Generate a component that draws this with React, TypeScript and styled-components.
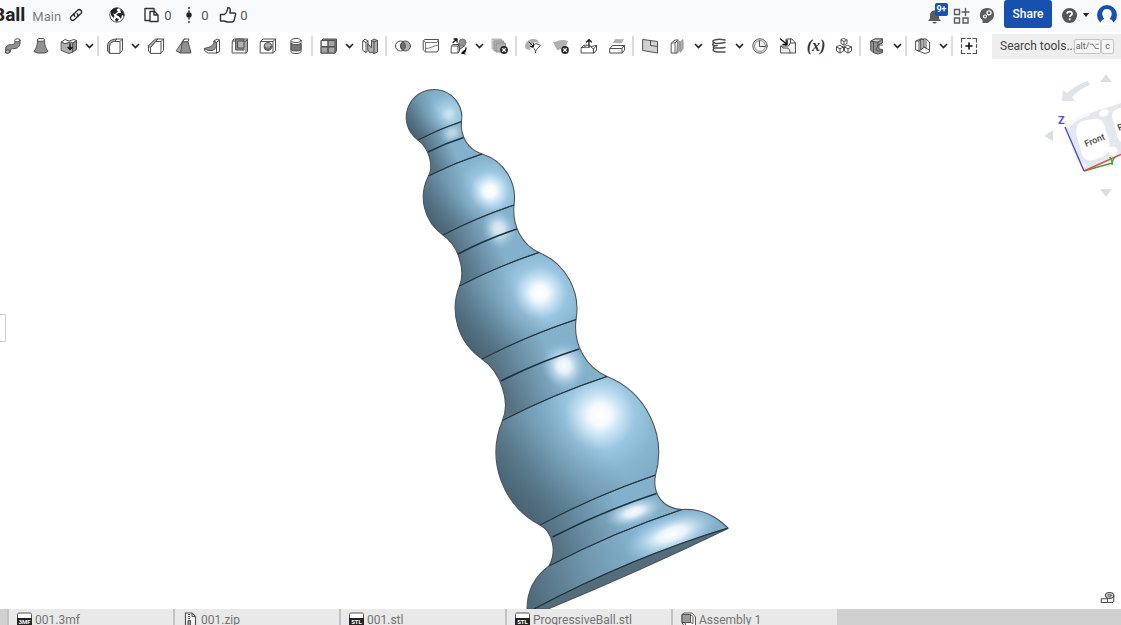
import React from "react";
import styled, { createGlobalStyle } from "styled-components";

const GlobalStyle = createGlobalStyle`
  * { box-sizing: border-box; }
  body { margin: 0; background: #fff; font-family: Roboto, "Noto Sans", sans-serif; color: #333; }
  button, input { font: inherit; color: inherit; }
`;

const Page = styled.div`
  display: flex;
  flex-direction: column;
  height: 100vh;
  overflow: hidden;
`;

const Header = styled.header`
  display: flex;
  align-items: center;
  justify-content: space-between;
  flex: none;
  height: 32px;
  padding-bottom: 2px;
  background: #f9fafc;
`;

const HeaderGroup = styled.div`
  display: flex;
  align-items: center;
`;

const Title = styled.h1`
  margin: 0 7px 0 -7px;
  font-size: 19px;
  line-height: 24px;
  font-weight: 700;
  color: #222;
`;

const Branch = styled.span`
  font-size: 13px;
  line-height: 16px;
  margin: 4px 8px 0 0;
  color: #808080;
`;

const IconButton = styled.button<{ $w?: number }>`
  display: flex;
  align-items: center;
  justify-content: center;
  flex: none;
  width: ${(p) => p.$w ?? 28}px;
  height: 28px;
  padding: 0;
  border: 0;
  background: none;
`;

const GlobeButton = styled(IconButton)`
  margin-left: 8px;
`;

const Counter = styled.button<{ $w: number }>`
  display: flex;
  align-items: center;
  gap: 3px;
  width: ${(p) => p.$w}px;
  height: 28px;
  padding: 0;
  border: 0;
  background: none;
  font-size: 13px;
  color: #555;
`;

const ShareButton = styled.button`
  width: 48px;
  height: 28px;
  margin: 0 8px 2px 4px;
  padding: 0;
  border: 0;
  border-radius: 3px;
  background: #1651b0;
  color: #fff;
  font-size: 12px;
  font-weight: 500;
`;

const Alerts = styled(IconButton)`
  position: relative;
`;

const Badge = styled.span`
  position: absolute;
  top: 2px;
  right: 0;
  width: 13px;
  height: 13px;
  border-radius: 2px;
  background: #1651b0;
  color: #fff;
  font-size: 9px;
  line-height: 13px;
  font-weight: 700;
  text-align: center;
`;

const Toolbar = styled.div`
  display: flex;
  align-items: center;
  justify-content: space-between;
  flex: none;
  height: 28px;
  background: #fff;
`;

const Tools = styled.div`
  display: flex;
  align-items: center;
  margin-left: -1px;
`;

const Divider = styled.span`
  flex: none;
  width: 5px;
  height: 20px;
  border: solid #fff;
  border-width: 0 2px 0 1px;
  background: #dcdcdc;
`;

const Search = styled.label`
  display: flex;
  align-items: center;
  flex: none;
  width: 129px;
  height: 25px;
  padding-left: 8px;
  background: #eeeeee;
`;

const SearchInput = styled.input`
  width: 74px;
  padding: 0;
  border: 0;
  background: none;
  font-size: 12px;
  outline: none;
  &::placeholder { color: #444; opacity: 1; }
`;

const Key = styled.kbd<{ $w: number }>`
  width: ${(p) => p.$w}px;
  height: 15px;
  border: 1px solid #c4c4c4;
  border-radius: 2px;
  background: #f5f5f5;
  font-family: inherit;
  font-size: 9px;
  line-height: 13px;
  text-align: center;
  white-space: nowrap;
  color: #666;
  overflow: hidden;
`;

const Stage = styled.main`
  position: relative;
  display: flex;
  justify-content: center;
  flex: 1;
  min-height: 0;
  overflow: hidden;
  background: #fff;
`;

const ModelSvg = styled.svg`
  flex: none;
`;

const PanelHandle = styled.button`
  position: absolute;
  left: -1px;
  top: 254px;
  width: 7px;
  height: 28px;
  padding: 0;
  border: 1px solid #cfcfcf;
  background: #fff;
`;

const CubeSvg = styled.svg`
  position: absolute;
  top: 0;
  right: 0;
`;

const MeasureButton = styled(IconButton)`
  position: absolute;
  right: 0;
  bottom: -2px;
`;

const TabBar = styled.nav`
  display: flex;
  flex: none;
  height: 16px;
  padding-left: 7px;
  background: #d0d0d0;
  overflow: hidden;
`;

const Tab = styled.a`
  display: flex;
  align-items: center;
  gap: 2px;
  flex: none;
  width: 166px;
  height: 22px;
  padding-left: 7px;
  border-left: 2px solid #c2c2c2;
  background: #e9e9e9;
  color: #737373;
  font-size: 12px;
  line-height: 22px;
  text-decoration: none;
`;

const S = "#505050";
const G = "#b0b0b0";
const D = "#919191";

const Ic = ({ children, size = 18 }: { children: React.ReactNode; size?: number }) => (
  <svg width={size} height={size} viewBox="0 0 18 18" fill="none" stroke={S} strokeWidth="1" strokeLinejoin="round" strokeLinecap="round" aria-hidden="true">
    {children}
  </svg>
);

const Cross = () => (
  <>
    <circle cx="13" cy="13" r="3.9" fill="#2b2b2b" stroke="none" />
    <path d="M11.6 11.6l2.8 2.8M14.4 11.6l-2.8 2.8" stroke="#fff" strokeWidth="1.3" />
  </>
);

const icons: Record<string, React.ReactNode> = {
  Sweep: (
    <>
      <path d="M1.500 13c0-5 3-5.500 6-5.300 2.500 0 3.500-.7 3.500-3.700l5-1c.5 5-1 8-5 8.500-3 .3-4.500-.5-5 4L2 16z" fill={D} />
      <ellipse cx="13.400" cy="3.300" rx="2.800" ry="1.500" fill="#fff" />
      <ellipse cx="3.700" cy="14.500" rx="2.200" ry="1.800" fill={G} />
    </>
  ),
  Loft: (
    <>
      <path d="M5.500 3c0 5-1 8-3.500 11.500l3.500 1.500h7l3.500-1.500C13.500 11 12.500 8 12.500 3z" fill={D} />
      <path d="M5.500 3l1-1.500h5l1 1.500-1 1.200h-5z" fill="#fff" />
    </>
  ),
  Thicken: (
    <>
      <path d="M1.500 5l4 1.500 5-1.500 2.500 1v9l-4 1.500-4-1.500-3.500-1.500z" fill={G} />
      <path d="M1.500 5L5 2.500l4 1.500 5-1.500 2.500 1L13 6l-2.500-1-5 1.500z" fill="#fff" />
      <path d="M13 6l3.500-2.500v9L13 15z" fill={D} />
      <path d="M10 7v5M8 10.500l2 2 2-2" stroke="#111" strokeWidth="1.500" />
    </>
  ),
  Fillet: (
    <>
      <path d="M3.500 16V10c0-4 2-5.500 5-5.500H14V16z" fill="#fff" />
      <path d="M3.500 10c0-4 2-5.500 5-5.500L11 2C5 2 1.500 5 1.500 9v5l2 2z" fill={G} />
      <path d="M11 2h5.500v11.500L14 16M16.500 2L14 4.500" />
    </>
  ),
  Chamfer: (
    <>
      <path d="M3.500 16v-5.500l5-6H14V16z" fill="#fff" />
      <path d="M3.500 10.500l5-6L11 2H8.500L1.500 8.500z" fill={G} />
      <path d="M1.500 8.500V14l2 2M11 2h5.500v11.500L14 16M16.500 2L14 4.500" />
    </>
  ),
  Draft: (
    <>
      <path d="M7.500 4.500H13l3 11.500H5.500z" fill={D} />
      <path d="M7.500 4.500L9.500 2H14l-1 2.500z" fill="#fff" />
      <path d="M9.500 2l-2 2.500L5.500 16l-4-2z" fill={G} />
    </>
  ),
  Rib: (
    <>
      <path d="M1.500 11.500l3-1C9 10 11 7 11 4l2.500 1.500v9L5 13.500z" fill={D} />
      <path d="M11 4l3-2 2.500 1v11.500l-3 1.500H5l-3.500-2.500v-2L5 13.500h5L13.500 10V5.500z" fill="#fff" />
      <path d="M13.500 5.500l3-2.500M13.500 10v6" />
    </>
  ),
  Shell: (
    <>
      <path d="M1.500 4L3 2h13.500v12.500L15 16H1.500z" fill="#fff" />
      <path d="M1.500 4H15v12M15 4l1.500-2" />
      <path d="M5 2h8v11H5z" fill={D} />
      <path d="M7 4h6v7H7z" fill={G} />
    </>
  ),
  Hole: (
    <>
      <path d="M1.500 4.500L4 2h12.500v11.500L14 16H1.500z" fill="#fff" />
      <path d="M1.500 4.500H14V16M14 4.500L16.500 2" />
      <circle cx="9" cy="9.500" r="4" fill={G} />
      <path d="M6 10a3 3 0 003 2.500 3.500 3.500 0 003-3" fill={D} />
    </>
  ),
  Thread: (
    <>
      <path d="M4 3.500v11c0 1.200 2 2 5 2s5-.8 5-2v-11" fill="#fff" />
      <path d="M4 6.500v6c2 2 8 2 10 0v-6c-2 1.500-8 1.500-10 0z" fill="#777" />
      <ellipse cx="9" cy="3.500" rx="5" ry="2" fill="#fff" />
    </>
  ),
  Pattern: (
    <>
      <path d="M1.500 3.500L3 2h13.500v12L15 16H1.500z" fill="#808080" />
      <path d="M1.500 3.500H8v6H1.500z" fill="#f0f0f0" />
      <path d="M8.500 3.500H15v6H8.500zM1.500 10H8v6H1.500zM8.500 10H15v6H8.500z" fill="#a5a5a5" />
    </>
  ),
  Mirror: (
    <>
      <path d="M2 4l2-2 3 2v9.500l-2 2L2 13.500z" fill="#fff" />
      <path d="M2 4l3 1.500v10M5 5.500L7 4" />
      <path d="M7 7l3.500 4V3.500L13 2l3.500 1.500V15L13 16.500 11 15l-2 1-2-3z" fill={G} />
      <path d="M10.500 3.500L13 5v11.500M13 5l3.500-1.500" />
    </>
  ),
  Boolean: (
    <>
      <circle cx="6.500" cy="9" r="5" fill="#fff" />
      <circle cx="11.500" cy="9" r="5" fill={G} />
      <path d="M9 4.700a5 5 0 010 8.600 5 5 0 010-8.600z" fill="#6d6d6d" />
    </>
  ),
  Split: (
    <>
      <path d="M1.500 3.500L3 2.500h13.500V13L15 15H3.500l-2-2z" fill="#fff" />
      <path d="M1.500 3.500l2 2H15l1.500-3M3.500 5.500V15M3.500 11.500c4 .5 8-3 13-3.500" stroke="#777" />
    </>
  ),
  Transform: (
    <>
      <path d="M1.500 9L3 7.500h6.500V14L8 16H1.500z" fill="#fff" />
      <path d="M1.500 9H8v7M8 9l1.500-1.500" />
      <path d="M9 6.500l6 2-5 3.500z" fill={G} />
      <circle cx="12.500" cy="5.500" r="3.500" fill={D} stroke="#777" />
      <path d="M3 5.500L6.500 2.500M4 2H7v3M16 11l-1 4-3 1.500M14.500 13.500L12 16l3 1" stroke="#111" strokeWidth="1.300" />
    </>
  ),
  "Delete part": (
    <>
      <path d="M1.500 2h9v10h-9z" fill="#c4c4c4" stroke={G} />
      <path d="M3.500 4h9v10h-9z" fill="#b8b8b8" stroke={D} />
      <path d="M5.500 6h9v9h-9z" fill={G} stroke={D} />
      <Cross />
    </>
  ),
  "Modify fillet": (
    <>
      <path d="M1 10C1 5 5 2 9 2s6 2 6 4l-4-1-4 3-1 5-4-1z" fill={G} stroke="none" />
      <path d="M9.500 8.500L12 6.500l4.500 2-3 3c-1 1-2 2-2 4.500-.5-4-1-5.500-4-6z" fill="#fff" />
      <path d="M5 5l4.500 4.500M9.500 6.500v3h-3" stroke="#222" />
    </>
  ),
  "Delete face": (
    <>
      <path d="M1 5c4 1 6-4 15-1l-3 8c-4-2-6 2-8 1z" fill={G} stroke="none" />
      <Cross />
    </>
  ),
  "Move face": (
    <>
      <path d="M1.500 10.500c3 0 5-2 7.500-3l2 2 5.500-1V13L14 16H1.500z" fill="#fff" />
      <path d="M1.500 10.500l2-2 3-.5M1.500 10.500c5 0 6 .5 9-1l3 2.500 3-3.500M13.500 12v4" />
      <path d="M9 10V2.500M6.500 5L9 2.500 11.500 5" stroke="#222" strokeWidth="1.300" />
    </>
  ),
  "Replace face": (
    <>
      <path d="M3 6.500c3 0 3-4.500 5-4.500s5 1 8-.5L14 6c-4 1-6-1-11 .5z" fill={G} stroke="none" />
      <path d="M2 11.500l2.500-3h12V13L14 16H2z" fill="#fff" />
      <path d="M2 11.500h12V16M14 11.500l2.500-3" />
    </>
  ),
  Plane: (
    <>
      <path d="M2 2.500l14.500 2v11.500L2 13.500z" fill="#d2d2d2" />
      <path d="M9.500 3.500v5l7 1" />
    </>
  ),
  Helix: (
    <>
      <path d="M2.500 6L6 3h3L8 16H2.500z" fill="#fff" />
      <path d="M2.500 6H6l3-3M6 6v10" stroke="#666" />
      <path d="M8.500 6.500L11 4v9l-2.500 3zM11.500 5L14 2.500v9L11.500 15z" fill={G} stroke={D} />
    </>
  ),
  Spring: (
    <path d="M15 3C7 1.500 2 3 3 5s7 1.500 12 .5M4.500 9C2 10.500 4 11 7 11s6 0 8-.5M4.500 5.500C1 8 3 9 7 8.500M4.500 11C1.500 13.500 4 14.500 7 15h8" strokeWidth="1.500" />
  ),
  "Curve pattern": (
    <>
      <circle cx="9" cy="9" r="7.200" />
      <circle cx="9" cy="9" r="5.500" fill="#f4f4f4" stroke="#888" />
      <path d="M8.500 4v5.500H14" />
    </>
  ),
  "Import part": (
    <>
      <path d="M2 9h5V2h6l3.500 4v10H2z" fill="#f0f0f0" />
      <path d="M7 9h2.500l2-3V2M11.500 6h5M2 9l2 2h4c2 0 3 2 3 5" />
      <path d="M1.500 2l6 5M8 3.500V7.500H4" stroke="#111" strokeWidth="1.500" />
    </>
  ),
  Configurations: (
    <>
      <path d="M9 1.500l3 1.500v3.500L9 8 6 6.500V3zM6 3l3 1.500L12 3M9 4.500V8" fill="#fff" />
      <path d="M5 8.500L8.500 10v4L5 16l-3.500-2v-4zM1.500 10L5 11.800 8.500 10M5 11.800V16" fill="#fff" />
      <path d="M13 8.500l3.500 1.500v4L13 16l-3.500-2v-4zM9.500 10l3.500 1.800 3.500-1.800M13 11.800V16" fill="#fff" />
    </>
  ),
  "Sheet metal": (
    <>
      <path d="M3 4l4-2h7.500v4L11 7.500V12l3.500.5v3L10 17l-5-1.500-2-2z" fill={D} />
      <path d="M3 4l4-2h7.500L10 5z" fill="#d8d8d8" />
      <path d="M10 5v3h4.500M10 8l-2 5 3 1h3.500M5.500 5v10" />
    </>
  ),
  Frame: (
    <>
      <path d="M2 4l4-2h6l3.500 3v10L11 16.500 2 13z" fill="#fff" />
      <path d="M2 4h3v10M5 4l2.500-2M5 14l5-4 5.500 3" />
      <path d="M7 2.500h3v8l-3 2z" fill={G} />
      <path d="M12 2v9l-2-1" />
    </>
  ),
  "Add custom feature": (
    <>
      <path d="M1.500 5V1.500H5M7.500 1.500h3M13 1.500h3.500V5M16.500 7.500v3M16.500 13v3.500H13M10.500 16.500h-3M5 16.500H1.500V13M1.500 10.500v-3" strokeWidth="1.200" />
      <path d="M9 6v6M6 9h6" stroke="#111" strokeWidth="1.600" />
    </>
  ),
};

const Variable = styled.span`
  font-family: "Liberation Serif", serif;
  font-size: 16px;
  line-height: 18px;
  font-weight: 700;
  font-style: italic;
`;

const toolGroups: string[][] = [
  ["Sweep", "Loft", "Thicken", "v"],
  ["Fillet", "v", "Chamfer", "Draft", "Rib", "Shell", "Hole", "Thread"],
  ["Pattern", "v", "Mirror"],
  ["Boolean", "Split", "Transform", "v", "Delete part"],
  ["Modify fillet", "Delete face", "Move face", "Replace face"],
  ["Plane", "Helix", "v", "Spring", "v", "Curve pattern", "Import part", "Variable", "Configurations"],
  ["Sheet metal", "v"],
  ["Frame", "v"],
  ["Add custom feature"],
];

const Chevron = () => (
  <svg width="9" height="6" viewBox="0 0 9 6" fill="none" stroke="#222" strokeWidth="1.600" aria-hidden="true">
    <path d="M1 1l3.500 3.500L8 1" />
  </svg>
);

const Tool = ({ name }: { name: string }) => {
  if (name === "v") return <IconButton $w={13} aria-label="More tools"><Chevron /></IconButton>;
  return (
    <IconButton aria-label={name}>
      {name === "Variable" ? <Variable>(x)</Variable> : <Ic>{icons[name]}</Ic>}
    </IconButton>
  );
};

type Pt = [number, number];
type Seam = [Pt, Pt];

const seams: Seam[] = [
  [[418, 140], [461.500, 121.500]],
  [[428, 152], [463.500, 137.500]],
  [[428.500, 176], [482, 154]],
  [[443, 235], [514, 205]],
  [[458, 254], [517, 229]],
  [[459.500, 286], [539, 252.500]],
  [[482, 359], [576, 319.500]],
  [[501, 381], [579, 349]],
  [[502.500, 420.500], [607, 376.500]],
  [[540, 525], [655.500, 475]],
  [[552.500, 537], [656.500, 493.500]],
  [[549, 566], [682, 509.500]],
];

const control = ([a, b]: Seam): Pt => {
  const bow = 0.04;
  return [(a[0] + b[0]) / 2 + (b[1] - a[1]) * bow, (a[1] + b[1]) / 2 - (b[0] - a[0]) * bow];
};
const forward = (s: Seam) => `Q${control(s)} ${s[1]}`;
const backward = (s: Seam) => `Q${control(s)} ${s[0]}`;

const balls = [
  { r: 27.800, light: [449, 114], top: -1, bottom: 0 },
  { r: 46, light: [490, 191], top: 2, bottom: 3 },
  { r: 61, light: [540, 293], top: 5, bottom: 6 },
  { r: 82, light: [600, 415], top: 8, bottom: 9 },
];

const ballPath = (b: (typeof balls)[number]) => {
  const low = seams[b.bottom];
  if (b.top < 0) return `M${low[0]} A${b.r} ${b.r} 0 1 1 ${low[1]} ${backward(low)}Z`;
  const up = seams[b.top];
  return `M${up[0]} ${forward(up)} A${b.r} ${b.r} 0 0 1 ${low[1]} ${backward(low)} A${b.r} ${b.r} 0 0 1 ${up[0]}Z`;
};

const necks = [
  { up: 0, low: 2, right: "C460 135 467 149", left: "C434 166 429 148" },
  { up: 3, low: 5, right: "C512 226 522 245", left: "C466 270 458 245" },
  { up: 6, low: 8, right: "C573 345 586 367", left: "C510.500 401.500 501 372" },
  { up: 9, low: 11, right: "C652 494 663 509", left: "C557 552 553 532" },
];

const neckPath = (n: (typeof necks)[number]) => {
  const up = seams[n.up];
  const low = seams[n.low];
  return `M${up[0]} ${forward(up)} ${n.right} ${low[1]} ${backward(low)} ${n.left} ${up[0]}Z`;
};

const glows = [
  { x: 452, y: 133, rx: 13, ry: 10, o: 0.500 },
  { x: 499, y: 229, rx: 17, ry: 20, o: 0.750 },
  { x: 564, y: 366, rx: 22, ry: 24, o: 0.950 },
  { x: 634, y: 512, rx: 30, ry: 13, o: 0.950 },
];

const basePath = `M549 566 ${forward(seams[11])} C702 508 718 518 728 528 Q632 557 534 609 L527 609 C527 592 534 577 549 566Z`;

const Model = () => (
  <ModelSvg width="351" height="549" viewBox="385 60 351 549" role="img" aria-label="Model">
    <defs>
      {balls.map((b, i) => (
        <radialGradient key={i} id={`ball${i}`} gradientUnits="userSpaceOnUse" cx={b.light[0]} cy={b.light[1]} r={b.r * 1.750}>
          <stop offset="0" stopColor={i ? "#fff" : "#cbe6f4"} />
          <stop offset=".07" stopColor={i ? "#f6fbff" : "#bfdff0"} />
          <stop offset=".15" stopColor={i ? "#c6e2f3" : "#a9d0e6"} />
          <stop offset=".25" stopColor="#98c5e0" />
          <stop offset=".4" stopColor="#87b5d0" />
          <stop offset=".65" stopColor="#7aa5bf" />
          <stop offset="1" stopColor="#6b90a6" />
        </radialGradient>
      ))}
      <linearGradient id="shade" x1=".02" y1=".78" x2=".58" y2=".38">
        <stop offset="0" stopColor="#435c6a" stopOpacity=".9" />
        <stop offset=".25" stopColor="#435c6a" stopOpacity=".68" />
        <stop offset=".65" stopColor="#435c6a" stopOpacity=".22" />
        <stop offset="1" stopColor="#435c6a" stopOpacity="0" />
      </linearGradient>
      {necks.map((n, i) => {
        const [a, b] = seams[n.up + 1];
        return (
          <linearGradient key={i} id={`neck${i}`} gradientUnits="userSpaceOnUse" x1={a[0]} y1={a[1]} x2={b[0]} y2={b[1]}>
            <stop offset="0" stopColor="#557282" />
            <stop offset=".3" stopColor="#6a8ea4" />
            <stop offset=".65" stopColor="#83b0ca" />
            <stop offset="1" stopColor="#83b0ca" />
          </linearGradient>
        );
      })}
      {necks.map((n, i) => (
        <clipPath key={i} id={`neckClip${i}`}><path d={neckPath(n)} /></clipPath>
      ))}
      <clipPath id="baseClip"><path d={basePath} /></clipPath>
      <radialGradient id="glow">
        <stop offset="0" stopColor="#fff" />
        <stop offset=".3" stopColor="#f4fbff" stopOpacity=".9" />
        <stop offset="1" stopColor="#a5d3ed" stopOpacity="0" />
      </radialGradient>
      <linearGradient id="base" gradientUnits="userSpaceOnUse" x1="530" y1="600" x2="715" y2="520">
        <stop offset="0" stopColor="#4f6a79" />
        <stop offset=".35" stopColor="#7199b0" />
        <stop offset=".65" stopColor="#88b8d4" />
        <stop offset="1" stopColor="#80adc8" />
      </linearGradient>
    </defs>

    <g stroke="#4d565c" strokeWidth="1.100" strokeLinejoin="round">
      {necks.map((n, i) => <path key={i} d={neckPath(n)} fill={`url(#neck${i})`} />)}
      {balls.map((b, i) => (
        <g key={i}>
          <path d={ballPath(b)} fill={`url(#ball${i})`} stroke="none" />
          <path d={ballPath(b)} fill="url(#shade)" />
        </g>
      ))}
      <path d={basePath} fill="url(#base)" />
      <path d="M728 528.500Q632 557 534 609H548Q640 571 728 528.500Z" fill="#536d7c" />
    </g>
    {glows.map((g, i) => (
      <g key={i} clipPath={`url(#neckClip${i})`}>
        <ellipse cx={g.x} cy={g.y} rx={g.rx} ry={g.ry} fill="url(#glow)" opacity={g.o} transform={`rotate(-18 ${g.x} ${g.y})`} />
      </g>
    ))}
    <g clipPath="url(#baseClip)">
      <ellipse cx="672" cy="534" rx="50" ry="20" fill="url(#glow)" transform="rotate(-20 672 534)" />
    </g>
    <g fill="none" stroke="#1c3542">
      {seams.map((s, i) => (
        <path key={i} d={`M${s[0]} ${forward(s)}`} strokeWidth={i % 3 === 1 ? 1.700 : 1} />
      ))}
      <path d="M728 528Q632 557 534 609" strokeWidth="1.200" />
    </g>
  </ModelSvg>
);

const ViewCube = () => (
  <CubeSvg width="85" height="150" viewBox="1036 60 85 150" role="img" aria-label="View cube">
    <g fill="#dcdfe2">
      <path d="M1100 82l6-8 6 8zM1100 189l6 8 6-8zM1053 130l-9 6 9 5z" />
      <path d="M1088 81l2 4c-8 3-13 7-18 12l3 4-13 0 1-11 4 3c6-5 12-9 21-12z" fill="#dfe4e8" />
    </g>
    <path d="M1066 126l15-10 40-13v52l-37 16z" fill="#e3e8ee" />
    <path d="M1068 128c5-8 15-13 22-14M1073 148c2 9 7 16 13 18" fill="none" stroke="#f6f8fa" strokeWidth="3" />
    <path d="M1077 127c1-5 6-7 16-8 7-1 9 1 12 8l4 14c2 8 0 13-7 16l-8 3c-7 2-10-1-12-6l-5-16c-1-5-1-8 0-11z" fill="#fff" />
    <path d="M1121 108c-6 1-10 4-9 9l5 18c1 4 2 6 4 7z" fill="#fff" />
    <ellipse cx="1104" cy="113" rx="5" ry="3.500" fill="#fff" transform="rotate(-20 1104 113)" />
    <circle cx="1113" cy="151" r="4.500" fill="#fff" />
    <text x="1086" y="147" fontFamily="Roboto, sans-serif" fontSize="9" fontWeight="500" fill="#444" transform="rotate(-22 1086 147)">Front</text>
    <text x="1119" y="131" fontFamily="Roboto, sans-serif" fontSize="9" fontWeight="500" fill="#444" transform="rotate(-22 1119 131)">R</text>
    <g fill="none" strokeWidth="1.400">
      <path d="M1084 171L1112 163" stroke="#36a436" />
      <path d="M1084 171L1121 154.500" stroke="#dd4b4b" />
      <path d="M1065 127l19 44" stroke="#5146cf" />
    </g>
    <text x="1058" y="124" fontFamily="Roboto, sans-serif" fontSize="11" fontWeight="700" fill="#5d4cd9">Z</text>
    <text x="1109" y="165" fontFamily="Roboto, sans-serif" fontSize="10" fontWeight="700" fill="#35a23b">Y</text>
  </CubeSvg>
);

const FileIcon = ({ kind }: { kind: string }) => (
  <svg width="17" height="18" viewBox="0 0 17 18" fill="none" aria-hidden="true">
    {(kind === "3MF" || kind === "STL") && (
      <>
        <path d="M1.500 16V3.500c0-1 .5-1.500 1.500-1.500h11c1 0 1.500.5 1.500 1.500V16" fill="#fff" stroke="#555" />
        <path d="M1 7h15v7H1z" fill="#222" />
        <text x="8.500" y="13" textAnchor="middle" fontSize="6" fontWeight="700" fontFamily="Roboto, sans-serif" fill="#fff">{kind}</text>
      </>
    )}
    {kind === "zip" && (
      <>
        <path d="M3.500 16V2H10L13.500 5.500V16" fill="#f4f4f4" stroke="#555" strokeWidth="1.200" />
        <path d="M10 2v3.500h3.500" stroke="#555" />
        <path d="M7 3v7" stroke="#555" strokeWidth="2" strokeDasharray="1 1" />
        <path d="M6 9.500h2.500v5H6z" fill="#999" stroke="#555" />
      </>
    )}
    {kind === "assembly" && (
      <>
        <path d="M2 3.500L4 2h8l3.500 4v10.500H6L2 12z" fill="#fff" stroke="#555" />
        <path d="M2 3.500h8.500v8H2z" fill="#999" stroke="#555" />
        <path d="M10.500 3.500L13 5.500v7l-2.500-1M5 12l1 3" stroke="#555" />
      </>
    )}
  </svg>
);

const tabs = [
  { label: "001.3mf", kind: "3MF" },
  { label: "001.zip", kind: "zip" },
  { label: "001.stl", kind: "STL" },
  { label: "ProgressiveBall.stl", kind: "STL" },
  { label: "Assembly 1", kind: "assembly" },
];

export default function App() {
  return (
    <Page>
      <GlobalStyle />
      <Header>
        <HeaderGroup>
          <Title>Ball</Title>
          <Branch>Main</Branch>
          <IconButton $w={14} aria-label="Copy link">
            <Ic size={14}>
              <path d="M7.500 10.500c-1-1-1-3 .3-4.300l3.500-3.500a3 3 0 014.200 4.200L12 10.400M10.500 7.500c1 1 1 3-.3 4.300l-3.500 3.500a3 3 0 01-4.200-4.200L6 7.600" stroke="#222" strokeWidth="1.700" />
            </Ic>
          </IconButton>
          <GlobeButton $w={52} aria-label="Public document">
            <Ic>
              <circle cx="9" cy="9" r="7.200" fill="#fff" />
              <path d="M3 5c2-3 5-3.500 7-3L8.500 4 10 5.500 7 8 5 7.500 6.500 10l-1 2L3 9zM12 3l3.500 3 .5 4-2-1-1 4-2.500-3L8 9l2.500-2L13 7zM8 12l3 1-2 3-2-2z" fill="#222" stroke="none" />
            </Ic>
          </GlobeButton>
          <Counter $w={37} aria-label="Copies">
            <Ic>
              <path d="M7 14.500H2v-12h9V5M4.500 2.500h4" stroke="#333" strokeWidth="1.400" />
              <path d="M7 5.500h4.500L15 9v6.500H7zM11 5.500V9h4" fill="#fff" stroke="#333" strokeWidth="1.400" />
            </Ic>
            <span>0</span>
          </Counter>
          <Counter $w={39} aria-label="Versions">
            <Ic>
              <path d="M9 1.500v15" stroke="#222" strokeWidth="1.400" strokeDasharray="1 2.500" />
              <circle cx="9" cy="9" r="2.700" fill="#222" stroke="none" />
            </Ic>
            <span>0</span>
          </Counter>
          <Counter $w={34} aria-label="Likes">
            <Ic>
              <path d="M1.500 8.500h4c2-1.500 3-4 3.500-7 2 0 3 2 1.800 5.500h4.700c1 0 1.300.8 1 1.800l-1.500 5.700c-.2 1-.8 1.500-1.700 1.500H8l-2.500-1h-4z" fill="#fff" stroke="#333" strokeWidth="1.400" />
            </Ic>
            <span>0</span>
          </Counter>
        </HeaderGroup>
        <HeaderGroup>
          <Alerts aria-label="Notifications">
            <Ic>
              <path d="M3 15c2-2 2-3 2-5.500C5 6 7 4.500 9.500 4.500S14 6 14 9.500c0 2.500 0 3.500 2 5.500zM7.500 16h4c0 1-1 1.500-2 1.500s-2-.5-2-1.500z" fill="#5c5c5c" stroke="none" />
            </Ic>
            <Badge>9+</Badge>
          </Alerts>
          <IconButton $w={26} aria-label="Apps">
            <Ic>
              <path d="M2.500 3.500h5v5h-5zM2.500 12h5v5h-5zM11 12h5v5h-5zM13.500 2.500v7M10 6h7" stroke="#5c5c5c" strokeWidth="1.400" strokeLinejoin="miter" />
            </Ic>
          </IconButton>
          <IconButton $w={26} aria-label="Learning">
            <Ic>
              <path d="M4.500 17v-3C2 12.500 1.500 10.500 2 8c.5-4 3.500-6 7.500-6 4.500 0 6.500 3 6.500 6.500 0 3-1.500 5.500-4 6.500l-2 2z" fill="#5c5c5c" stroke="none" />
              <circle cx="11" cy="6.800" r="2" stroke="#fff" strokeWidth="1.300" />
              <circle cx="7" cy="10.500" r="1.500" stroke="#fff" strokeWidth="1.100" />
            </Ic>
          </IconButton>
          <ShareButton>Share</ShareButton>
          <IconButton $w={18} aria-label="Help">
            <svg width="15" height="15" viewBox="0 0 16 16" aria-hidden="true">
              <circle cx="8" cy="8" r="8" fill="#555" />
              <path d="M5.500 6.200C5.500 3 10.700 3.200 10.700 6c0 1.800-2.500 1.800-2.500 3.700M8.200 11v2" fill="none" stroke="#fff" strokeWidth="1.900" />
            </svg>
          </IconButton>
          <IconButton $w={15} aria-label="Help menu">
            <svg width="6" height="4" viewBox="0 0 6 4" aria-hidden="true"><path d="M0 0h6L3 4z" fill="#222" /></svg>
          </IconButton>
          <IconButton $w={28} aria-label="Account">
            <svg width="20" height="20" viewBox="0 0 20 20" aria-hidden="true">
              <circle cx="10" cy="10" r="10" fill="#1651b0" />
              <path d="M3.500 20c-.5-4 2-5.500 4-6C4 10.500 4.500 4 10 4s6 6.500 2.500 10c2 .5 4.500 2 4 6z" fill="#fff" />
            </svg>
          </IconButton>
        </HeaderGroup>
      </Header>

      <Toolbar>
        <Tools>
          {toolGroups.map((group, i) => (
            <React.Fragment key={i}>
              {i > 0 && <Divider />}
              {group.map((name, j) => <Tool key={j} name={name} />)}
            </React.Fragment>
          ))}
        </Tools>
        <Search>
          <SearchInput aria-label="Search tools" placeholder="Search tools..." />
          <Key $w={27}>alt/⌥</Key>
          <Key $w={13}>c</Key>
        </Search>
      </Toolbar>

      <Stage>
        <Model />
        <PanelHandle aria-label="Open panel" />
        <ViewCube />
        <MeasureButton aria-label="Measure">
          <Ic size={15}>
            <path d="M1.500 10.500H9V15H1.500zM9 15h6l1.500-2V6" strokeWidth="1.300" fill="#fff" />
            <ellipse cx="11.500" cy="6.500" rx="5" ry="3.500" fill="#ccc" strokeWidth="1.300" />
            <ellipse cx="11.500" cy="6.500" rx="2" ry="1.200" />
          </Ic>
        </MeasureButton>
      </Stage>

      <TabBar aria-label="Documents">
        {tabs.map((t) => (
          <Tab key={t.label} href="#">
            <FileIcon kind={t.kind} />
            {t.label}
          </Tab>
        ))}
      </TabBar>
    </Page>
  );
}
